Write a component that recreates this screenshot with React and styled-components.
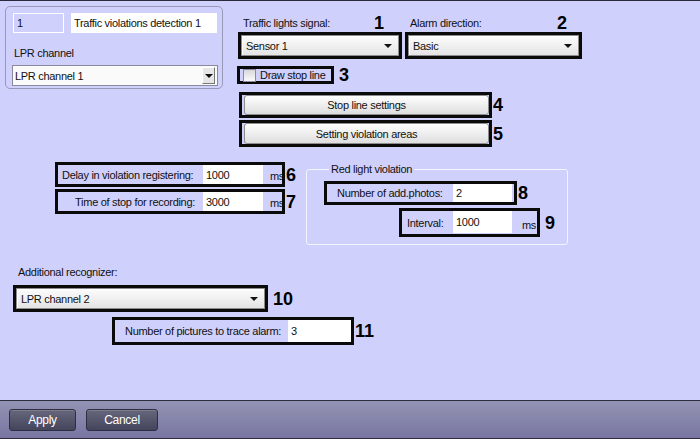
import React from "react"
import styled, { createGlobalStyle } from "styled-components"

const GlobalStyle = createGlobalStyle`
  html, body {
    margin: 0;
    padding: 0;
    background: #d0d0fd;
  }
  body {
    font-family: "Liberation Sans", Arial, sans-serif;
    font-size: 11px;
    letter-spacing: -0.3px;
    color: #111;
  }
  * {
    box-sizing: border-box;
  }
`

const Window = styled.div`
  width: 700px;
  height: 439px;
  display: flex;
  flex-direction: column;
  overflow: hidden;
  white-space: nowrap;
`

const Main = styled.div`
  height: 400px;
  border-top: 1px solid #2a2a3c;
  background: #d0d0fd;
  display: flex;
  flex-direction: column;
`

const TopSection = styled.div`
  display: flex;
  align-items: flex-start;
  margin-top: 5px;
`

const Panel = styled.div`
  margin-left: 5px;
  width: 218px;
  height: 83px;
  border: 1px solid #9898b8;
  border-radius: 5px;
  padding: 6px 0 0 7px;
  display: flex;
  flex-direction: column;
`

const PanelRow = styled.div`
  display: flex;
  gap: 7px;
`

const PanelLabel = styled.div`
  margin: 13px 0 0 1px;
  line-height: 14px;
`

const TextInput = styled.input`
  width: ${({ $w }) => $w}px;
  height: ${({ $h }) => $h || 20}px;
  border: ${({ $disabled }) => ($disabled ? "1px solid #fff" : "none")};
  background: ${({ $disabled }) => ($disabled ? "transparent" : "#fff")};
  font: inherit;
  letter-spacing: inherit;
  color: #111;
  padding: 0 3px;
  margin: 0;
  outline: none;
  align-self: ${({ $top }) => ($top ? "flex-start" : "center")};
`

const PanelCombo = styled.div`
  margin: 5px 0 0 -1px;
  width: 206px;
  height: 21px;
  display: flex;
  align-items: center;
  justify-content: space-between;
  background: #fafafa;
  border: 1px solid #8a8a9c;
  padding: 0 2px 0 2px;
`

const DropButton = styled.span`
  width: 13px;
  height: 17px;
  display: flex;
  align-items: center;
  justify-content: center;
  background: #e6e6e6;
  border: 1px solid;
  border-color: #fff #777 #777 #fff;
`

const RightColumn = styled.div`
  margin: 8px 0 0 15px;
  display: flex;
  flex-direction: column;
`

const FieldPair = styled.div`
  display: flex;
  gap: 3px;
`

const LabeledField = styled.div`
  display: flex;
  flex-direction: column;
  width: ${({ $w }) => $w}px;
`

const FieldHeader = styled.div`
  height: 18px;
  display: flex;
  justify-content: space-between;
  align-items: flex-end;
  padding: 0 ${({ $pr }) => $pr}px 0 5px;
`

const HeaderLabel = styled.span`
  line-height: 14px;
  padding-bottom: 2px;
`

const Mark = styled.span`
  font-family: "Liberation Sans", Arial, sans-serif;
  font-weight: bold;
  font-size: 18px;
  letter-spacing: 0;
  line-height: 18px;
  color: #000;
  margin-left: ${({ $ml }) => $ml || 1}px;
`

const Box = styled.div`
  display: flex;
  align-items: ${({ $align }) => $align || "center"};
  width: ${({ $w }) => ($w ? `${$w}px` : "auto")};
  height: ${({ $h }) => $h}px;
  border: 3px solid #0a0a0a;
  padding: ${({ $pad }) => $pad || "0"};
`

const Combo = styled.div`
  flex: 1;
  height: 100%;
  display: flex;
  align-items: center;
  justify-content: space-between;
  padding: 0 6px 0 4px;
  background: linear-gradient(#fcfcfc, #e4e4e4);
  border: 1px solid #8c8c8c;
  box-shadow: inset 1px 1px 0 #fff;
`

const Arrow = () => (
  <svg width="8" height="4" viewBox="0 0 8 4">
    <polygon points="0,0 8,0 4,4" fill="#111" />
  </svg>
)

const MarkedRow = styled.div`
  display: flex;
  align-items: center;
  margin: ${({ $m }) => $m || "0"};
`

const CheckBox = styled.span`
  width: 13px;
  height: 13px;
  flex-shrink: 0;
  border: 1px solid #8a8a9c;
  background: linear-gradient(#d8d8dc, #fbfbfb);
  margin: 0 4px 0 3px;
`

const CheckText = styled.span`
  line-height: 14px;
`

const PushButton = styled.button`
  flex: 1;
  height: 100%;
  margin: 0;
  border: 1px solid #8d8d8d;
  border-radius: 3px;
  background: linear-gradient(#fefefe, #dedede);
  font: inherit;
  letter-spacing: inherit;
  color: #111;
  padding: 0;
`

const MiddleSection = styled.div`
  display: flex;
  align-items: flex-start;
  margin-top: 15px;
`

const LeftFields = styled.div`
  width: 251px;
  margin-left: 55px;
  display: flex;
  flex-direction: column;
  gap: 2px;
`

const FieldLabel = styled.span`
  width: ${({ $w }) => $w}px;
  flex-shrink: 0;
  text-align: ${({ $right }) => ($right ? "right" : "left")};
  padding: ${({ $right, $pl }) => ($right ? `0 8px 0 0` : `0 0 0 ${$pl || 4}px`)};
  line-height: 14px;
  align-self: center;
`

const Unit = styled.span`
  margin-left: ${({ $ml }) => $ml}px;
  line-height: 14px;
  align-self: flex-end;
  padding-bottom: ${({ $pb }) => $pb || 1}px;
`

const Group = styled.fieldset`
  width: 262px;
  margin: 0;
  border: 1px solid #f4f4ff;
  border-radius: 3px;
  padding: 5px 0 7px 17px;
  display: flex;
  flex-direction: column;
`

const GroupLegend = styled.legend`
  margin-left: 5px;
  padding: 0 2px;
  line-height: 14px;
`

const BottomSection = styled.div`
  display: flex;
  flex-direction: column;
  margin-top: 20px;
`

const SectionLabel = styled.div`
  margin-left: 18px;
  line-height: 14px;
`

const Footer = styled.div`
  height: 39px;
  border-top: 1px solid #2c2c3e;
  border-bottom: 1px solid #2c2c3e;
  background: linear-gradient(#9393b3, #7876a2);
  display: flex;
  align-items: center;
  gap: 10px;
  padding: 1px 0 0 9px;
`

const FooterButton = styled.button`
  width: ${({ $w }) => $w}px;
  height: 22px;
  margin: 0;
  border: 1px solid #2e2e40;
  border-radius: 3px;
  background: linear-gradient(#66667c, #44445c);
  box-shadow: inset 0 1px 0 rgba(255, 255, 255, 0.15);
  color: #fff;
  font: inherit;
  font-size: 12px;
  letter-spacing: inherit;
  padding: 0;
`

const App = () => (
  <Window>
    <GlobalStyle />
    <Main>
      <TopSection>
        <Panel>
          <PanelRow>
            <TextInput $w={51} $disabled readOnly value="1" />
            <TextInput $w={146} readOnly value="Traffic violations detection 1" />
          </PanelRow>
          <PanelLabel>LPR channel</PanelLabel>
          <PanelCombo>
            <span>LPR channel 1</span>
            <DropButton>
              <Arrow />
            </DropButton>
          </PanelCombo>
        </Panel>

        <RightColumn>
          <FieldPair>
            <LabeledField $w={164}>
              <FieldHeader $pr={18}>
                <HeaderLabel>Traffic lights signal:</HeaderLabel>
                <Mark>1</Mark>
              </FieldHeader>
              <Box $h={27}>
                <Combo>
                  <span>Sensor 1</span>
                  <Arrow />
                </Combo>
              </Box>
            </LabeledField>
            <LabeledField $w={177}>
              <FieldHeader $pr={15}>
                <HeaderLabel>Alarm direction:</HeaderLabel>
                <Mark>2</Mark>
              </FieldHeader>
              <Box $h={27}>
                <Combo>
                  <span>Basic</span>
                  <Arrow />
                </Combo>
              </Box>
            </LabeledField>
          </FieldPair>

          <MarkedRow $m="7px 0 0 -1px">
            <Box $w={97} $h={18}>
              <CheckBox />
              <CheckText>Draw stop line</CheckText>
            </Box>
            <Mark $ml={5}>3</Mark>
          </MarkedRow>

          <MarkedRow $m="8px 0 0 1px">
            <Box $w={253} $h={26} $pad="0 0 0 2px">
              <PushButton>Stop line settings</PushButton>
            </Box>
            <Mark>4</Mark>
          </MarkedRow>
          <MarkedRow $m="2px 0 0 1px">
            <Box $w={253} $h={27} $pad="0 0 0 2px">
              <PushButton>Setting violation areas</PushButton>
            </Box>
            <Mark>5</Mark>
          </MarkedRow>
        </RightColumn>
      </TopSection>

      <MiddleSection>
        <LeftFields>
          <MarkedRow>
            <Box $w={230} $h={25}>
              <FieldLabel $w={145}>Delay in violation registering:</FieldLabel>
              <TextInput $w={60} $h={19} readOnly value="1000" />
              <Unit $ml={7}>ms</Unit>
            </Box>
            <Mark>6</Mark>
          </MarkedRow>
          <MarkedRow>
            <Box $w={230} $h={25}>
              <FieldLabel $w={145} $right>
                Time of stop for recording:
              </FieldLabel>
              <TextInput $w={60} $h={19} readOnly value="3000" />
              <Unit $ml={7}>ms</Unit>
            </Box>
            <Mark>7</Mark>
          </MarkedRow>
        </LeftFields>

        <Group>
          <GroupLegend>Red light violation</GroupLegend>
          <MarkedRow>
            <Box $w={193} $h={24}>
              <FieldLabel $w={126} $pl={10}>
                Number of add.photos:
              </FieldLabel>
              <TextInput $w={59} $h={18} readOnly value="2" />
            </Box>
            <Mark $ml={0}>8</Mark>
          </MarkedRow>
          <MarkedRow $m="3px 0 0 75px">
            <Box $w={141} $h={29} $align="flex-start">
              <FieldLabel $w={51} $pl={5}>
                Interval:
              </FieldLabel>
              <TextInput $w={59} $h={22} $top readOnly value="1000" />
              <Unit $ml={10} $pb={2}>
                ms
              </Unit>
            </Box>
            <Mark $ml={5}>9</Mark>
          </MarkedRow>
        </Group>
      </MiddleSection>

      <BottomSection>
        <SectionLabel>Additional recognizer:</SectionLabel>
        <MarkedRow $m="6px 0 0 13px">
          <Box $w={255} $h={27}>
            <Combo>
              <span>LPR channel 2</span>
              <Arrow />
            </Combo>
          </Box>
          <Mark $ml={5}>10</Mark>
        </MarkedRow>
        <MarkedRow $m="5px 0 0 112px">
          <Box $w={242} $h={28}>
            <FieldLabel $w={173} $pl={10}>
              Number of pictures to trace alarm:
            </FieldLabel>
            <TextInput $w={63} $h={22} readOnly value="3" />
          </Box>
          <Mark>11</Mark>
        </MarkedRow>
      </BottomSection>
    </Main>

    <Footer>
      <FooterButton $w={67}>Apply</FooterButton>
      <FooterButton $w={72}>Cancel</FooterButton>
    </Footer>
  </Window>
)

export default App
